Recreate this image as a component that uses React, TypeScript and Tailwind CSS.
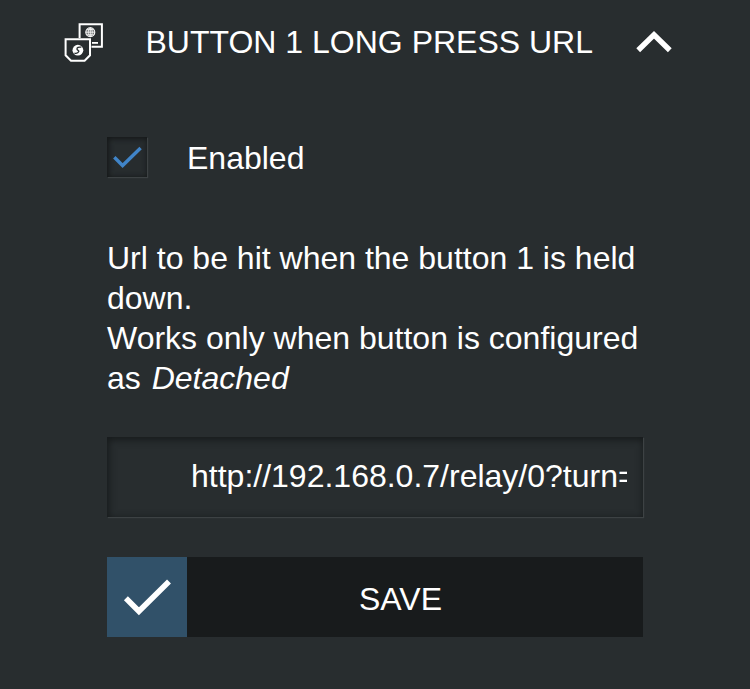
import { useState } from "react";

function UrlActionIcon() {
  return (
    <svg width="40" height="40" viewBox="0 0 40 40" fill="none" stroke="#fff">
      {/* screen behind */}
      <path d="M15.6 16V2.2H37.9V24.7H27.5" strokeWidth="2" />
      <circle cx="26.3" cy="10.2" r="4.5" fill="#ffffff59" strokeWidth="1.1" />
      <path
        d="M21.8 10.2H30.8M26.3 5.7V14.7M22.8 7.6H29.8M22.8 12.8H29.8M26.3 5.7C23.6 8 23.6 12.4 26.3 14.7C29 12.4 29 8 26.3 5.7"
        strokeWidth="0.8"
      />
      <path d="M28 20.9H34" strokeWidth="1.8" />
      {/* relay body in front */}
      <path d="M1.6 17.3H26V33.3L20.6 38.8H7L1.6 33.3Z" strokeWidth="2" />
      <circle cx="13.9" cy="28.2" r="5.4" fill="#fff" stroke="none" />
      <path
        d="M17.4 25.2C14.8 24.6 12.6 25.8 13 27.2C13.4 28.6 15.3 28.2 14.8 29.6C14.2 31 12.4 31.6 10.4 31.1"
        stroke="#282d2f"
        strokeWidth="1.3"
      />
    </svg>
  );
}

export default function App() {
  const [open, setOpen] = useState(true);
  const [enabled, setEnabled] = useState(true);
  const [url, setUrl] = useState("http://192.168.0.7/relay/0?turn=on");

  return (
    <main className="h-[689px] w-[750px] overflow-hidden bg-[#282d2f] font-['Liberation_Sans',Arial,sans-serif] text-[32px] leading-10 text-white">
      <button
        type="button"
        onClick={() => setOpen(!open)}
        className="flex h-[84px] w-full items-center pl-16 text-left"
      >
        <UrlActionIcon />
        <span className="ml-[41.5px] w-[490.5px] whitespace-nowrap">BUTTON 1 LONG PRESS URL</span>
        <svg width="36" height="22" viewBox="0 0 36 22" fill="none" className={open ? "" : "rotate-180"}>
          <path d="M2.2 19.3L18 3.8L33.8 19.3" stroke="#fff" strokeWidth="5.4" />
        </svg>
      </button>

      {open && (
        <section className="ml-[107px] w-[536px] pt-[53px]">
          <label className="flex h-10 items-start">
            <input
              type="checkbox"
              checked={enabled}
              onChange={(e) => setEnabled(e.target.checked)}
              className="sr-only"
            />
            <span className="flex size-10 items-center justify-center bg-[#272c2e] shadow-[inset_1px_1px_5px_1px_#151819,1px_1px_1px_#3d4244]">
              {enabled && (
                <svg width="30" height="24" viewBox="0 0 30 24" fill="none">
                  <path d="M2.3 12.3L10.6 20.5L28.6 3" stroke="#4084c8" strokeWidth="3.4" />
                </svg>
              )}
            </span>
            <span className="ml-10 pt-px">Enabled</span>
          </label>

          <div className="mt-[61px]">
            <p>Url to be hit when the button 1 is held down.</p>
            <p>
              Works only when button is configured as <em className="ml-0.5">Detached</em>
            </p>
          </div>

          <div className="mt-[39px] flex h-20 items-start bg-[#282d2f] pt-[19px] pr-4 pl-[84px] shadow-[inset_1px_2px_7px_1px_#171b1c,1px_1px_1px_#3d4244]">
            <input
              type="text"
              value={url}
              onChange={(e) => setUrl(e.target.value)}
              className="h-10 w-full bg-transparent outline-none"
            />
          </div>

          <button type="button" className="mt-10 flex h-20 w-full bg-[#181b1c]">
            <span className="flex size-20 items-center justify-center bg-[#315169]">
              <svg width="50" height="38" viewBox="0 0 50 38" fill="none">
                <path d="M3.9 20.2L16.9 33.2L47 3.6" stroke="#fff" strokeWidth="5.6" />
              </svg>
            </span>
            <span className="flex h-20 flex-1 items-center justify-center pt-[3px] pr-[29px]">SAVE</span>
          </button>
        </section>
      )}
    </main>
  );
}
